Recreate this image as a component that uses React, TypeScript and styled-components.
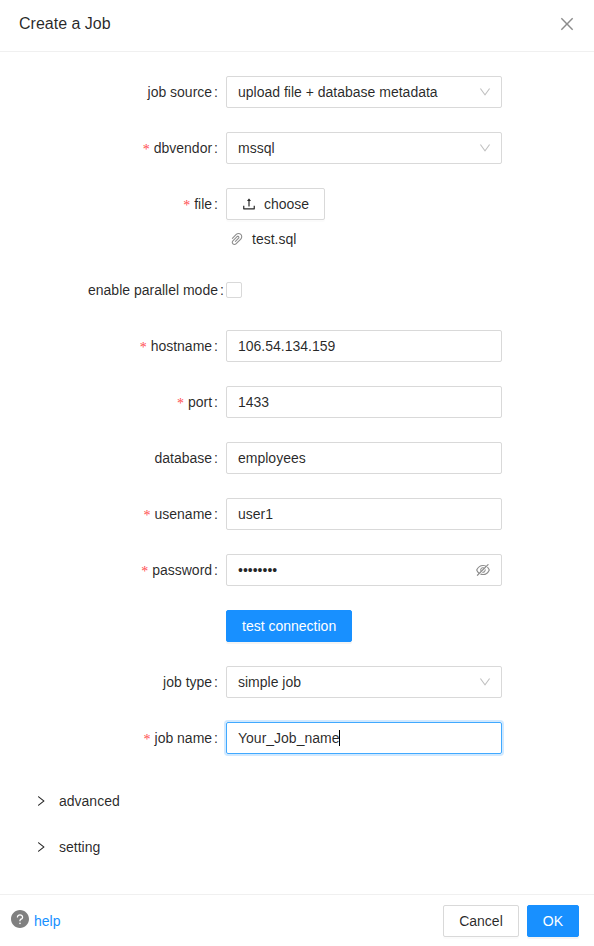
import React from "react";
import styled, { createGlobalStyle, css } from "styled-components";
import {
  AiFillQuestionCircle,
  AiOutlineClose,
  AiOutlineDown,
  AiOutlineEyeInvisible,
  AiOutlinePaperClip,
  AiOutlineRight,
  AiOutlineUpload,
} from "react-icons/ai";

const ink = "rgba(0, 0, 0, 0.85)";
const line = "#d9d9d9";
const divider = "#f0f0f0";
const blue = "#1890ff";

// Trims the empty margin that the icon set leaves round each glyph.
const tightBox = "64 64 896 896";

const GlobalStyle = createGlobalStyle`
  *, *::before, *::after { box-sizing: border-box; }
  body {
    margin: 0;
    background: #fff;
    color: ${ink};
    font-family: "Liberation Sans", Arial, sans-serif;
    font-size: 14px;
    line-height: 22px;
  }
  svg { display: block; flex: none; }
`;

const Modal = styled.div`
  display: flex;
  flex-direction: column;
  height: 946px;
  overflow: hidden;
`;

const Header = styled.header`
  display: flex;
  align-items: center;
  justify-content: space-between;
  height: 52px;
  padding: 0 19px 4px;
  border-bottom: 1px solid ${divider};
`;

const Title = styled.h1`
  margin: 0;
  font-size: 16px;
  font-weight: 400;
`;

const CloseButton = styled.button`
  display: flex;
  padding: 0;
  border: 0;
  background: none;
  color: rgba(0, 0, 0, 0.45);
  font-size: 16px;
`;

const Form = styled.form`
  flex: 1;
  padding-top: 24px;
`;

const Row = styled.div`
  display: grid;
  grid-template-columns: 138px 276px;
  margin: 0 0 24px 88px;
`;

const Label = styled.label<{ $required?: boolean }>`
  height: 32px;
  line-height: 32px;
  text-align: right;
  white-space: nowrap;

  ${(p) =>
    p.$required &&
    css`
      &::before {
        content: "*";
        margin-right: 4px;
        color: #ff4d4f;
        font-family: "Liberation Serif", serif;
        line-height: 1;
        vertical-align: -1px;
      }
    `}

  &::after {
    content: ":";
    margin: 0 8px 0 2px;
  }
`;

const Control = styled.div`
  display: flex;
  flex-direction: column;
  align-items: flex-start;
  min-height: 32px;
`;

const Field = styled.div<{ $focused?: boolean }>`
  display: flex;
  align-items: center;
  justify-content: space-between;
  width: 100%;
  height: 32px;
  padding: 0 11px;
  border: 1px solid ${(p) => (p.$focused ? "#40a9ff" : line)};
  border-radius: 2px;
  box-shadow: ${(p) => (p.$focused ? "0 0 0 2px rgba(24, 144, 255, 0.2)" : "none")};
`;

const Value = styled.span`
  display: flex;
  align-items: center;
`;

const Caret = styled.span`
  width: 1px;
  height: 16px;
  background: #000;
`;

const FieldIcon = styled.span<{ $muted?: boolean }>`
  margin-right: ${(p) => (p.$muted ? -1 : 0)}px;
  color: ${(p) => (p.$muted ? "rgba(0, 0, 0, 0.25)" : "rgba(0, 0, 0, 0.45)")};
  font-size: ${(p) => (p.$muted ? 12 : 14)}px;
`;

const Button = styled.button<{ $primary?: boolean }>`
  display: flex;
  align-items: center;
  gap: 8px;
  height: 32px;
  padding: 0 15px;
  border: 1px solid ${(p) => (p.$primary ? blue : line)};
  border-radius: 2px;
  background: ${(p) => (p.$primary ? blue : "#fff")};
  box-shadow: 0 2px 0 rgba(0, 0, 0, ${(p) => (p.$primary ? 0.045 : 0.015)});
  color: ${(p) => (p.$primary ? "#fff" : ink)};
  font: inherit;
`;

const UploadedFile = styled.div`
  display: flex;
  align-items: center;
  gap: 8px;
  height: 22px;
  margin-top: 8px;
  padding-left: 4px;

  svg {
    color: rgba(0, 0, 0, 0.45);
  }
`;

const Checkbox = styled.span`
  width: 16px;
  height: 16px;
  margin-top: 8px;
  border: 1px solid ${line};
  border-radius: 2px;
`;

const Panels = styled.div`
  display: flex;
  flex-direction: column;
  padding-left: 35px;
`;

const PanelHeader = styled.div`
  display: flex;
  align-items: center;
  gap: 12px;
  height: 46px;

  svg {
    font-size: 12px;
  }
`;

const Footer = styled.footer`
  display: flex;
  align-items: center;
  gap: 8px;
  height: 52px;
  padding: 0 15px 0 11px;
  border-top: 1px solid ${divider};
`;

const Help = styled.a`
  display: flex;
  align-items: center;
  gap: 5px;
  margin-right: auto;
  color: ${blue};

  svg {
    margin-bottom: 4px;
    color: #808080;
    font-size: 18px;
  }
`;

type ItemProps = { label: string; required?: boolean; children: React.ReactNode };

const Item = ({ label, required, children }: ItemProps) => (
  <Row>
    <Label $required={required}>{label}</Label>
    <Control>{children}</Control>
  </Row>
);

const Select = ({ value }: { value: string }) => (
  <Field>
    <Value>{value}</Value>
    <FieldIcon $muted>
      <AiOutlineDown viewBox={tightBox} />
    </FieldIcon>
  </Field>
);

const Input = ({ value }: { value: string }) => (
  <Field>
    <Value>{value}</Value>
  </Field>
);

export default function App() {
  return (
    <>
      <GlobalStyle />
      <Modal>
        <Header>
          <Title>Create a Job</Title>
          <CloseButton type="button" aria-label="Close">
            <AiOutlineClose viewBox={tightBox} />
          </CloseButton>
        </Header>
        <Form>
          <Item label="job source">
            <Select value="upload file + database metadata" />
          </Item>
          <Item label="dbvendor" required>
            <Select value="mssql" />
          </Item>
          <Item label="file" required>
            <Button type="button">
              <AiOutlineUpload viewBox={tightBox} />
              choose
            </Button>
            <UploadedFile>
              <AiOutlinePaperClip viewBox={tightBox} />
              test.sql
            </UploadedFile>
          </Item>
          <Item label="enable parallel mode">
            <Checkbox role="checkbox" aria-checked={false} />
          </Item>
          <Item label="hostname" required>
            <Input value="106.54.134.159" />
          </Item>
          <Item label="port" required>
            <Input value="1433" />
          </Item>
          <Item label="database">
            <Input value="employees" />
          </Item>
          <Item label="usename" required>
            <Input value="user1" />
          </Item>
          <Item label="password" required>
            <Field>
              <Value>••••••••</Value>
              <FieldIcon>
                <AiOutlineEyeInvisible viewBox={tightBox} />
              </FieldIcon>
            </Field>
          </Item>
          <Row>
            <span />
            <Control>
              <Button type="button" $primary>
                test connection
              </Button>
            </Control>
          </Row>
          <Item label="job type">
            <Select value="simple job" />
          </Item>
          <Item label="job name" required>
            <Field $focused>
              <Value>
                Your_Job_name
                <Caret />
              </Value>
            </Field>
          </Item>
          <Panels>
            <PanelHeader>
              <AiOutlineRight viewBox={tightBox} />
              advanced
            </PanelHeader>
            <PanelHeader>
              <AiOutlineRight viewBox={tightBox} />
              setting
            </PanelHeader>
          </Panels>
        </Form>
        <Footer>
          <Help>
            <AiFillQuestionCircle viewBox={tightBox} />
            help
          </Help>
          <Button type="button">Cancel</Button>
          <Button type="button" $primary>
            OK
          </Button>
        </Footer>
      </Modal>
    </>
  );
}
